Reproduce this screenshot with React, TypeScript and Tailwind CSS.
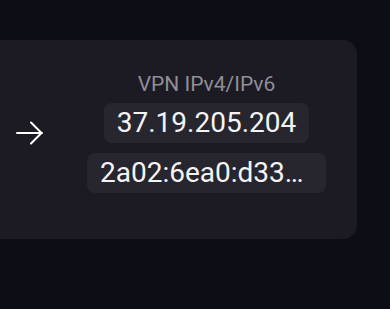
import React from 'react';

const ArrowIcon: React.FC = () => (
  <svg width="28" height="24" viewBox="0 0 28 24" fill="none" stroke="currentColor" strokeWidth="2" strokeLinecap="round" strokeLinejoin="round">
    <path d="M1 12h25" />
    <path d="M15 1.5 25.5 12 15 22.5" />
  </svg>
);

const IpPill: React.FC<{ value: string; className?: string }> = ({ value, className = '' }) => (
  <div className={`rounded-[8px] bg-[#27262f] px-[13px] text-[28px] leading-[40px] text-[#f4f4f6] ${className}`}>
    {value}
  </div>
);

const App: React.FC = () => {
  return (
    <div className="h-[309px] w-[390px] overflow-hidden bg-[#0d0d16] pt-[40px] font-['Roboto',sans-serif]">
      <div className="mr-[33px] flex items-center rounded-r-[14px] bg-[#1c1b24] pb-[46px] pl-[16px] pr-[31px] pt-[32px]">
        <div className="text-white">
          <ArrowIcon />
        </div>
        <div className="ml-[43px] flex flex-col items-center">
          <div className="text-[21px] leading-[24px] text-[#8f8e97]">VPN IPv4/IPv6</div>
          <IpPill value="37.19.205.204" className="mt-[7px]" />
          <IpPill value="2a02:6ea0:d33…" className="mt-[10px] w-[239px] whitespace-nowrap" />
        </div>
      </div>
    </div>
  );
};

export default App;
